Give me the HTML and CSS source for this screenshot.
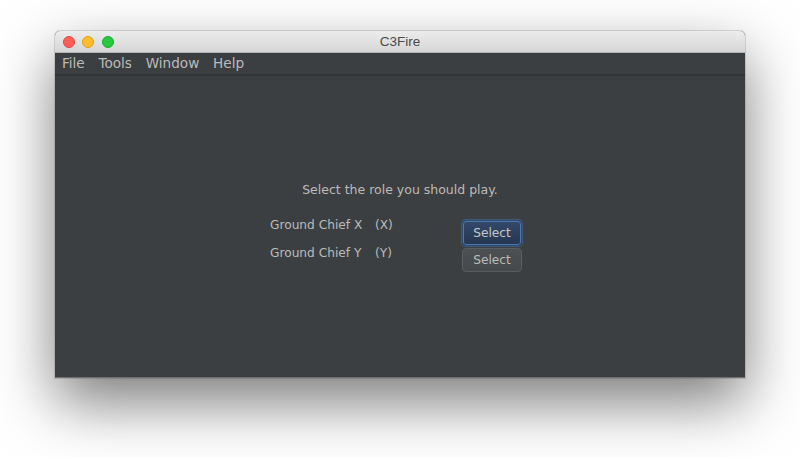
FILE: index.html
```html
<!DOCTYPE html>
<html>
<head>
<meta charset="utf-8">
<link rel="stylesheet" href="styles.css">
<title>C3Fire</title>
</head>
<body>
<div class="window">
  <div class="titlebar">
    <div class="lights">
      <span class="light red"></span>
      <span class="light yellow"></span>
      <span class="light green"></span>
    </div>
    <div class="title">C3Fire</div>
    <div class="spacer"></div>
  </div>
  <div class="menubar">
    <span class="menu-item">File</span>
    <span class="menu-item">Tools</span>
    <span class="menu-item">Window</span>
    <span class="menu-item">Help</span>
  </div>
  <div class="content">
    <div class="form">
      <div class="prompt">Select the role you should play.</div>
      <div class="label">Ground Chief X</div>
      <div class="code">(X)</div>
      <div class="cell"><button class="btn btn-default">Select</button></div>
      <div class="label">Ground Chief Y</div>
      <div class="code">(Y)</div>
      <div class="cell"><button class="btn btn-plain">Select</button></div>
    </div>
  </div>
</div>
</body>
</html>
```

FILE: styles.css
```css
html, body {
  margin: 0;
  padding: 0;
  background: #ffffff;
}

body {
  width: 800px;
  height: 457px;
  overflow: hidden;
  padding: 31px 0 0 55px;
  box-sizing: border-box;
}

.window {
  width: 690px;
  height: 347px;
  display: flex;
  flex-direction: column;
  border-radius: 5px 5px 0 0;
  background: #3c3f41;
  box-shadow: 0 24px 60px rgba(0, 0, 0, 0.52), 0 0 0 1px rgba(0, 0, 0, 0.12);
  border-bottom: 1px solid #6e7072;
  box-sizing: border-box;
}

.titlebar {
  height: 21px;
  border-bottom: 1px solid #b4b4b4;
  border-radius: 5px 5px 0 0;
  background: linear-gradient(#ececec, #d6d6d6);
  display: grid;
  grid-template-columns: 1fr auto 1fr;
  align-items: center;
  flex: none;
}

.lights {
  display: flex;
  gap: 7.6px;
  padding-left: 7.7px;
  align-items: center;
}

.light {
  width: 12px;
  height: 12px;
  border-radius: 50%;
  box-sizing: border-box;
}

.red { background: #fc5f57; border: 0.5px solid #e2463f; }
.yellow { background: #fdbc2e; border: 0.5px solid #e1a116; }
.green { background: #28c840; border: 0.5px solid #14ae2a; }

.title {
  font-family: "Liberation Sans", Arial, sans-serif;
  font-size: 13.5px;
  color: #4a4a4a;
  line-height: 21px;
}

.menubar {
  height: 21px;
  display: flex;
  align-items: center;
  padding-left: 0;
  background: #3c3f41;
  border-bottom: 2px solid #313335;
  flex: none;
}

.menu-item {
  font-family: "DejaVu Sans", sans-serif;
  font-size: 13.6px;
  color: #bbbbbb;
  padding: 0 6.9px;
  line-height: 21px;
}

.content {
  flex: 1;
  display: flex;
  align-items: center;
  justify-content: center;
  font-family: "DejaVu Sans", sans-serif;
  font-size: 12.2px;
  color: #bbbbbb;
}

.form {
  display: grid;
  grid-template-columns: 105px 87px 60px;
  grid-template-rows: 36px 28px 26px;
  margin-right: 8px;
  margin-top: 1px;
  line-height: 15px;
}

.prompt {
  grid-column: 1 / 4;
  height: 15px;
  text-align: center;
  padding-left: 8px;
  font-size: 12.5px;
}

.label, .code {
  align-self: start;
}

.cell {
  align-self: start;
  padding-top: 2px;
}

.btn {
  display: block;
  width: 60px;
  font-family: "DejaVu Sans", sans-serif;
  font-size: 12.2px;
  color: #bbbbbb;
  border-radius: 4px;
  padding: 0;
  box-sizing: border-box;
  cursor: default;
}

.btn-default {
  height: 26px;
  color: #c4c8cc;
  background: linear-gradient(#34496a, #253650);
  border: 1px solid #2a4a73;
  box-shadow: 0 0 0 1px #4e79ad inset, 0 0 1px 1px rgba(70, 110, 160, 0.6);
}

.btn-plain {
  height: 24px;
  background: linear-gradient(#4d5052, #46494b);
  border: 1px solid #5a5d5f;
}
```
